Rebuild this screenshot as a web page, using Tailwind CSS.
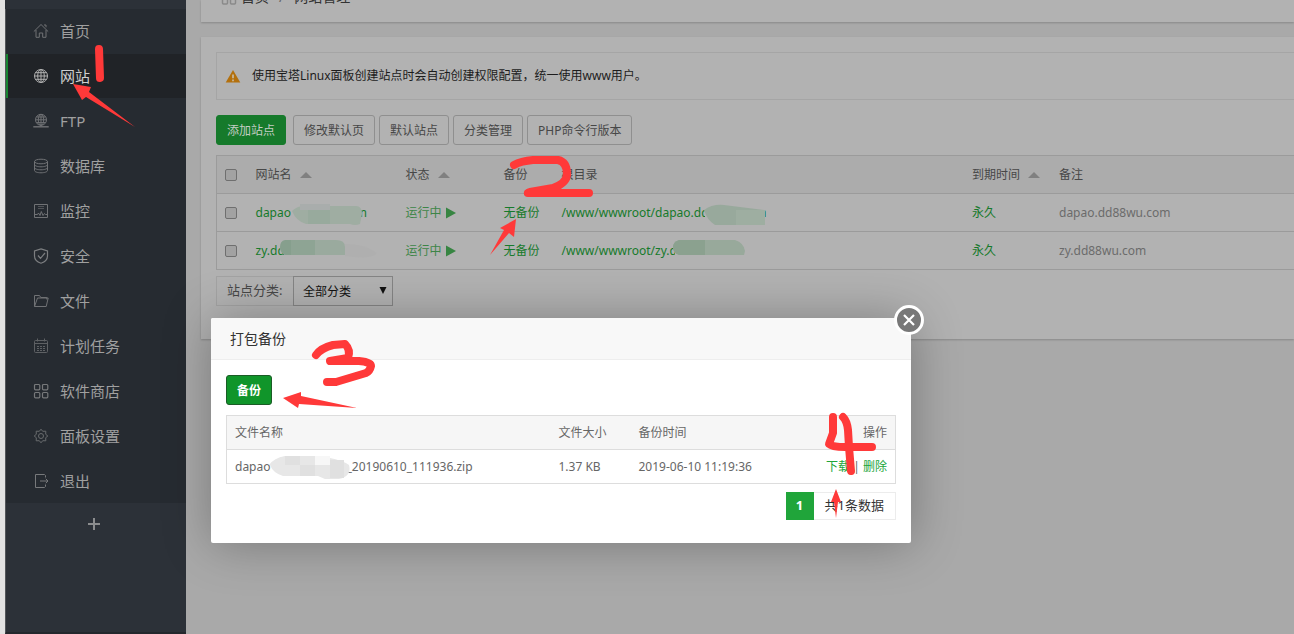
<!DOCTYPE html>
<html lang="zh-CN">
<head>
<meta charset="utf-8">
<meta name="viewport" content="width=device-width, initial-scale=1">
<title>网站管理</title>
<script src="https://cdn.jsdelivr.net/npm/@tailwindcss/browser@4"></script>
</head>
<body class="relative flex h-screen overflow-hidden bg-[#a9a9a9] font-['Noto_Sans','Noto_Sans_CJK_SC',sans-serif] text-xs text-[#474747]">

<!-- Sidebar -->
<aside class="flex w-[186px] shrink-0 flex-col border-l-[5px] border-[#e2e2e2] bg-[#2c3138] text-[15px] text-[#a0a0a0]">
  <nav class="mt-[9px] border-l border-[#53565a] bg-[#262b31]">
    <ul>
      <li class="h-[45px]"><a href="#" class="flex h-[44px] items-center gap-[11px] pl-[27px]">
        <svg class="size-4 text-[#707275]" viewBox="0 0 16 16" fill="none" stroke="currentColor"><path d="M.8 8.6 8 1.5l7.200 7.100M3 7v7.300h3.300V10h3.400v4.300H13V7M11 2h2v2.300"/></svg>首页</a></li>
      <li class="h-[45px]"><a href="#" class="flex h-[44px] items-center gap-[11px] border-l-2 border-[#178432] bg-[#202327] pl-[25px] text-[#cfcfcf]">
        <svg class="size-4 text-[#b0b0b0]" viewBox="0 0 16 16" fill="none" stroke="currentColor"><circle cx="8" cy="8" r="6.500"/><ellipse cx="8" cy="8" rx="3.300" ry="6.500"/><path d="M8 1.500v13M1.500 8h13M2.500 4.700h11M2.500 11.300h11"/></svg>网站</a></li>
      <li class="h-[45px]"><a href="#" class="flex h-[44px] items-center gap-[11px] pl-[27px]">
        <svg class="size-4 text-[#707275]" viewBox="0 0 16 16" fill="none" stroke="currentColor"><circle cx="8" cy="6.800" r="5.500"/><ellipse cx="8" cy="6.800" rx="2.700" ry="5.500"/><path d="M8 1.300v12M2.500 6.800h11M3.500 4h9M3.500 9.600h9"/><path d="M.3 13.800h15.400" stroke-width="1.400"/></svg>FTP</a></li>
      <li class="h-[45px]"><a href="#" class="flex h-[44px] items-center gap-[11px] pl-[27px]">
        <svg class="size-4 text-[#707275]" viewBox="0 0 16 16" fill="none" stroke="currentColor"><ellipse cx="8" cy="3.500" rx="6.500" ry="2.300"/><path d="M1.500 3.500v9c0 1.300 2.900 2.300 6.500 2.300s6.500-1 6.500-2.300v-9M1.500 6.500c0 1.300 2.900 2.300 6.500 2.300s6.500-1 6.500-2.300M1.500 9.500c0 1.300 2.900 2.300 6.500 2.300s6.500-1 6.500-2.300"/></svg>数据库</a></li>
      <li class="h-[45px]"><a href="#" class="flex h-[44px] items-center gap-[11px] pl-[27px]">
        <svg class="size-4 text-[#707275]" viewBox="0 0 16 16" fill="none" stroke="currentColor"><path d="M1.500 1.500h13v13h-13zM2 11.500h2.500l1-1.500 1.500 2.500 1.300-4 1.700 4 1.500-2 1 1h1.500"/><path d="M5 3.500h6M5 5.500h6" opacity=".6"/></svg>监控</a></li>
      <li class="h-[45px]"><a href="#" class="flex h-[44px] items-center gap-[11px] pl-[27px]">
        <svg class="size-4 text-[#7c7e80]" viewBox="0 0 16 16" fill="none" stroke="currentColor" stroke-width="1.200"><path d="M8 .9 14.500 3v5c0 3.500-3 6-6.500 7.200C4.500 14 1.500 11.500 1.500 8V3zM5 7.500l2.500 2.800L12 5"/></svg>安全</a></li>
      <li class="h-[45px]"><a href="#" class="flex h-[44px] items-center gap-[11px] pl-[27px]">
        <svg class="size-4 text-[#707275]" viewBox="0 0 16 16" fill="none" stroke="currentColor"><path d="M1.500 13.500v-11h5l1.300 2h6v2M1.500 13.500h11.700l2-8.500H4.500z" stroke-linejoin="round"/></svg>文件</a></li>
      <li class="h-[45px]"><a href="#" class="flex h-[44px] items-center gap-[11px] pl-[27px]">
        <svg class="size-4 text-[#5e6164]" viewBox="0 0 16 16" fill="none" stroke="currentColor"><rect x="1.500" y="2.500" width="13" height="12" rx="1"/><path d="M1.500 5.500h13M4.500.5v3M11.500.5v3"/><path d="M4 8.500h8.500M4 10.500h8.500M4 12.500h8.500" stroke-dasharray="2 1"/></svg>计划任务</a></li>
      <li class="h-[45px]"><a href="#" class="flex h-[44px] items-center gap-[11px] pl-[27px]">
        <svg class="size-4 text-[#77797b]" viewBox="0 0 16 16" fill="none" stroke="currentColor" stroke-width="1.200"><rect x="1.500" y="1.500" width="5.300" height="5.300" rx="1"/><rect x="9.500" y="1.500" width="5.300" height="5.300" rx="1"/><rect x="1.500" y="9.500" width="5.300" height="5.300" rx="1"/><rect x="9.500" y="9.500" width="5.300" height="5.300" rx="1"/></svg>软件商店</a></li>
      <li class="h-[45px]"><a href="#" class="flex h-[44px] items-center gap-[11px] pl-[27px]">
        <svg class="size-4 text-[#686b6d]" viewBox="0 0 16 16" fill="none" stroke="currentColor"><path d="M8 1.200 9.700 3.300 12.800 3.200 12.700 6.300 14.800 8 12.700 9.700 12.800 12.800 9.700 12.700 8 14.800 6.300 12.700 3.200 12.800 3.300 9.700 1.200 8 3.300 6.300 3.200 3.200 6.300 3.300z" stroke-linejoin="round"/><circle cx="8" cy="8" r="2.500"/></svg>面板设置</a></li>
      <li class="h-[44px]"><a href="#" class="flex h-[44px] items-center gap-[11px] pl-[27px]">
        <svg class="size-4 text-[#77797b]" viewBox="0 0 16 16" fill="none" stroke="currentColor"><path d="M12.500 4.500v-2l-1-1h-9v13h9l1-1v-2M7 8h8M12.800 5.800 15 8l-2.200 2.200"/></svg>退出</a></li>
    </ul>
  </nav>
  <div class="flex grow justify-center border-l border-b-2 border-l-[#53565a] border-b-[#24282d] pt-[13px] pr-[5px]">
    <button type="button" aria-label="添加" class="h-4">
      <svg class="size-4 text-[#8b8c8e]" viewBox="0 0 16 16" fill="none" stroke="currentColor" stroke-width="2"><path d="M8 2v12M2 8h12"/></svg>
    </button>
  </div>
</aside>

<!-- Page -->
<main class="min-w-0 grow pl-[15px]">
  <div class="flex h-[22px] items-end gap-1 overflow-hidden bg-[#b2b2b2] pb-[15px] pl-5 text-sm leading-5 text-[#333] shadow-[0_1px_2px_rgba(0,0,0,0.2)]">
    <svg class="mb-[2px] size-4 shrink-0 text-[#8a8a8a]" viewBox="0 0 16 16" fill="none" stroke="currentColor" stroke-width="1.500"><rect x="1.500" y="1.500" width="5" height="5" rx="1"/><rect x="9.500" y="1.500" width="5" height="5" rx="1"/><rect x="1.500" y="10" width="5" height="5" rx="1"/><rect x="9.500" y="10" width="5" height="5" rx="1"/></svg>
    <a href="#" class="text-[#333]">首页</a><span class="px-1.5 text-[#666]">/</span><span>网站管理</span>
  </div>

  <section class="mt-[15px] bg-[#b2b2b2] pt-[15px] pb-[33px] pl-[15px] shadow-[0_1px_2px_rgba(0,0,0,0.2)]">
    <p class="flex h-12 items-center gap-[11px] border border-r-0 border-[#a5a5a5] pl-2 text-[#1c1c1c]">
      <svg class="h-[15px] w-4 shrink-0" viewBox="0 0 16 15"><path d="M8 1 15.300 13.500H.7z" fill="#b3700d"/><path d="M8 5.500v3.800M8 10.500v1.700" stroke="#c9c4b8" stroke-width="1.500"/></svg>
      使用宝塔Linux面板创建站点时会自动创建权限配置，统一使用www用户。
    </p>

    <div class="mt-[15px] flex gap-1">
      <button type="button" class="mr-[3px] h-[30px] rounded-[3px] border border-[#167a2b] bg-[#167a2b] px-2.5 pt-px text-[#c4cdc4]">添加站点</button>
      <button type="button" class="h-[30px] rounded-[3px] border border-[#8f8f8f] px-2.5 pt-px">修改默认页</button>
      <button type="button" class="h-[30px] rounded-[3px] border border-[#8f8f8f] px-2.5 pt-px">默认站点</button>
      <button type="button" class="h-[30px] rounded-[3px] border border-[#8f8f8f] px-2.5 pt-px">分类管理</button>
      <button type="button" class="h-[30px] rounded-[3px] border border-[#8f8f8f] px-2.5 pt-px">PHP命令行版本</button>
    </div>

    <table class="mt-2.5 w-full table-fixed border-collapse border border-r-0 border-[#9b9b9b] text-left">
      <colgroup><col class="w-[31px]"><col class="w-[150px]"><col class="w-[98px]"><col class="w-[58px]"><col><col class="w-[87px]"><col class="w-[243px]"></colgroup>
      <thead>
        <tr class="h-[38px] border-b border-[#9b9b9b] bg-[#acacac]">
          <th class="pl-2"><input type="checkbox" aria-label="全选" class="block size-3 appearance-none rounded-[2px] border border-[#6f6f6f] bg-[#a2a2a2]"></th>
          <th class="pl-2 font-normal"><span class="flex items-center gap-2">网站名<svg class="h-1.5 w-3" viewBox="0 0 12 6"><path d="M6 0l6 6H0z" fill="#808080"/></svg></span></th>
          <th class="pl-2 font-normal"><span class="flex items-center gap-2">状态<svg class="h-1.5 w-3" viewBox="0 0 12 6"><path d="M6 0l6 6H0z" fill="#808080"/></svg></span></th>
          <th class="pl-2 font-normal">备份</th>
          <th class="pl-2 font-normal">根目录</th>
          <th class="pl-2 font-normal"><span class="flex items-center gap-2">到期时间<svg class="h-1.5 w-3" viewBox="0 0 12 6"><path d="M6 0l6 6H0z" fill="#808080"/></svg></span></th>
          <th class="pl-2 font-normal">备注</th>
        </tr>
      </thead>
      <tbody class="text-[#167a2b]">
        <tr class="h-[38px] border-b border-[#9b9b9b]">
          <td class="pl-2"><input type="checkbox" aria-label="选择 dapao" class="block size-3 appearance-none rounded-[2px] border border-[#6f6f6f] bg-[#a2a2a2]"></td>
          <td class="pl-2"><a href="#">dapao.dd88wu.com</a></td>
          <td class="pl-2"><a href="#" class="flex items-center gap-1 text-[#3d8547]">运行中<svg class="h-3 w-2.5" viewBox="0 0 10 12"><path d="M0 .5 10 6 0 11.500z" fill="#378542"/></svg></a></td>
          <td class="pl-2 whitespace-nowrap"><a href="#">无备份</a></td>
          <td class="pl-2"><a href="#">/www/wwwroot/dapao.dd88wu.com</a></td>
          <td class="pl-2"><a href="#">永久</a></td>
          <td class="pl-2 text-[#6b6b6b]">dapao.dd88wu.com</td>
        </tr>
        <tr class="h-[38px] border-b border-[#9b9b9b]">
          <td class="pl-2"><input type="checkbox" aria-label="选择 zy" class="block size-3 appearance-none rounded-[2px] border border-[#6f6f6f] bg-[#a2a2a2]"></td>
          <td class="pl-2"><a href="#">zy.dd88wu.com</a></td>
          <td class="pl-2"><a href="#" class="flex items-center gap-1 text-[#3d8547]">运行中<svg class="h-3 w-2.5" viewBox="0 0 10 12"><path d="M0 .5 10 6 0 11.500z" fill="#378542"/></svg></a></td>
          <td class="pl-2 whitespace-nowrap"><a href="#">无备份</a></td>
          <td class="pl-2"><a href="#">/www/wwwroot/zy.dd88wu.com</a></td>
          <td class="pl-2"><a href="#">永久</a></td>
          <td class="pl-2 text-[#6b6b6b]">zy.dd88wu.com</td>
        </tr>
      </tbody>
    </table>

    <div class="mt-1.5 flex h-[30px]">
      <label for="category" class="flex w-[77px] items-center border border-r-0 border-[#a3a3a3] pl-2.5 text-[13px]">站点分类:</label>
      <div class="relative w-[100px]">
        <select id="category" class="h-full w-full appearance-none border border-[#858585] pt-px pl-[9px] text-[#111]"><option>全部分类</option></select>
        <svg class="pointer-events-none absolute top-[11px] right-1.5 h-[7px] w-2" viewBox="0 0 8 7"><path d="M.5 0h7L4 7z" fill="#111"/></svg>
      </div>
    </div>
  </section>
</main>

<!-- Backup dialog -->
<section role="dialog" aria-labelledby="dialog-title" class="absolute top-[318px] left-[211px] w-[700px] rounded-[2px] bg-white pb-[23px] text-[#666] shadow-[1px_1px_50px_rgba(0,0,0,0.3)]">
  <h2 id="dialog-title" class="flex h-[42px] items-center rounded-t-[2px] border-b border-[#eee] bg-[#f8f8f8] pl-[19px] text-sm text-[#333]">打包备份</h2>
  <button type="button" aria-label="关闭" class="absolute -top-[13px] -right-[13px] flex size-[30px] items-center justify-center rounded-full border-[3px] border-white bg-[#787878]">
    <svg class="size-3" viewBox="0 0 12 12" fill="none" stroke="#fff" stroke-width="2.200"><path d="M1 1l10 10M11 1 1 11"/></svg>
  </button>
  <div class="px-[15px] pt-[15px]">
    <button type="button" class="block h-[30px] w-[46px] rounded-[3px] border border-[#1b5c26] bg-[#10952a] pt-px font-bold text-white">备份</button>
    <table class="mt-2.5 w-full table-fixed border-collapse border border-[#ddd] text-left">
      <colgroup><col class="w-[324px]"><col class="w-[80px]"><col><col class="w-[100px]"></colgroup>
      <thead>
        <tr class="h-[34px] border-b border-[#ddd] bg-[#f6f6f6]">
          <th class="pl-2 font-normal">文件名称</th><th class="pl-2 font-normal">文件大小</th><th class="pl-2 font-normal">备份时间</th><th class="pr-2 text-right font-normal">操作</th>
        </tr>
      </thead>
      <tbody>
        <tr class="h-[34px]">
          <td class="pl-2">dapao.dd88wu.com_20190610_111936.zip</td><td class="pl-2">1.37 KB</td><td class="pl-2">2019-06-10 11:19:36</td>
          <td class="pr-2 text-right"><a href="#" class="text-[#20a53a]">下载</a> | <a href="#" class="text-[#20a53a]">删除</a></td>
        </tr>
      </tbody>
    </table>
    <div class="mt-2 flex h-7 justify-end text-[13px] text-[#333]">
      <span class="flex w-7 items-center justify-center bg-[#20a53a] font-bold text-white">1</span>
      <span class="flex items-center border border-l-0 border-[#ececec] px-[11px]">共1条数据</span>
    </div>
  </div>
</section>

<!-- Redaction smudges and hand-drawn step marks -->
<svg class="pointer-events-none absolute top-0 left-0 h-[634px] w-[1294px]" viewBox="0 0 1294 634" fill="none" aria-hidden="true">
  <g>
    <path d="M291 203h67v22h-67zM705 203h60v22h-60zM675 240h70v16h-70z" fill="#b2b2b2"/>
    <path d="M271 458h76v18h-76z" fill="#fff"/>
    <path d="M292 211q4-4 10-5h54q6 0 6 8l-2 10q-5 2-10 0h-44q-10-3-14-13z" fill="#9fada2"/>
    <path d="M300 204h30v6h-30z" fill="#a9adac"/><path d="M308 210h22v14h-22z" fill="#98aa9d"/>
    <path d="M286 240h50q9 0 9 7v8h-58q-7-1-7-7z" fill="#9aaa9e"/><path d="M285 240h6v15h-6q-5-3-5-8 0-6 5-7z" fill="#869f8d"/><path d="M291 240h24v15h-24z" fill="#8ea494"/>
    <path d="M345 244q20 0 32 9-5 7-32 3z" fill="#afafaf"/>
    <path d="M704 210q8-6 20-5l40 5v15h-49q-8-5-11-15z" fill="#98a99c"/><path d="M736 210h29v15h-29z" fill="#9eaea1"/>
    <path d="M679 240h56q9 3 10 11l-1 4h-65q-6-2-6-8 0-5 6-7z" fill="#98a99b"/><path d="M679 240h26v15h-26q-6-2-6-8 0-5 6-7z" fill="#8ba18f"/>
    <path d="M269 465q5-7 16-9h30q24 2 34 9 3 11-10 14h-14l-7-3h-35q-10-3-13-11z" fill="#e7e7e7"/><path d="M285 456h15v9h-15zM300 465h15v11h-15zM330 460h14v18h-14z" fill="#e0e0e0"/><path d="M315 456h15v9h-15z" fill="#f7f7f7"/>
  </g>
  <g stroke="#ff3939" stroke-width="8" stroke-linecap="round" stroke-linejoin="round">
    <path d="M99 49 100 78"/>
    <path d="M514 165Q521 161 533 160L558 160Q567 162 567 174 567 183 553 188L530 192Q527 193 528 193H589"/>
    <path d="M316 355Q321 348 333 345L345 344Q351 350 348 358L330 361 359 361Q371 362 371 366 370 371 366 373L336 382H327"/>
    <path d="M833 417V433L829 444Q832 447 845 447H872M843 417Q847 421 848 430L849 447 851 471"/>
  </g>
  <g fill="#ff3939">
    <path d="M73 84 91 87 89 92 135 127 86 97 82 100z"/>
    <path d="M516 219 514 237 509 233 490 255 504 230 500 228z"/>
    <path d="M283 398 301 392 301 396 357 408 299 404 298 408z"/>
    <path d="M836 489 841 502 838 502 836 518 834 502 831 502z"/>
  </g>
</svg>
</body>
</html>
